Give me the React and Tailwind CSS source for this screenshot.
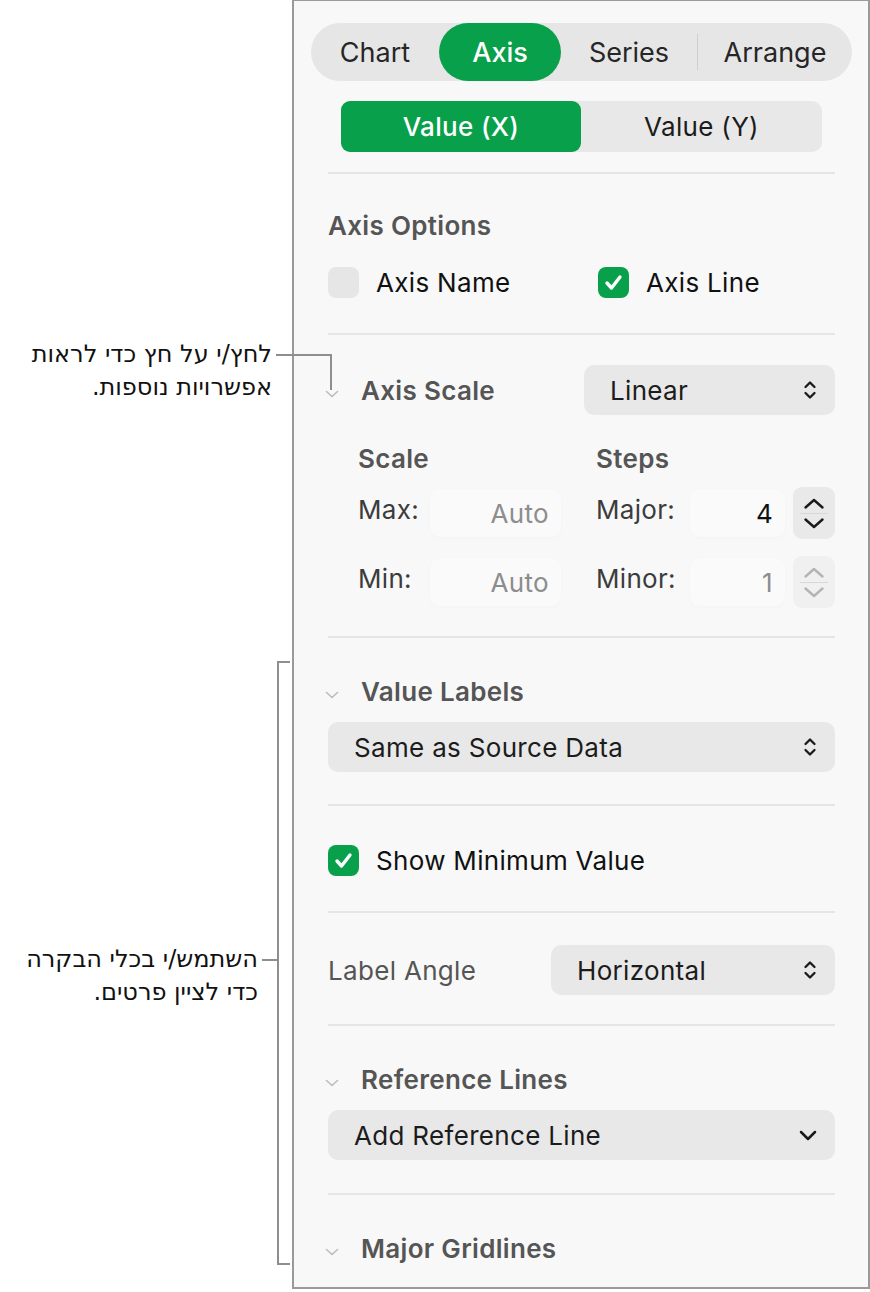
import React from 'react';

// inspector panel: Axis tab of the chart format sidebar, with two Hebrew callouts

const UpDown = ({ color = '#1a1a1a' }) => (
    <svg width="14" height="22" viewBox="0 0 14 22" fill="none" stroke={color} strokeWidth="2.3" strokeLinecap="round" strokeLinejoin="round">
        <path d="M2.5 8 L7 3.5 L11.5 8" />
        <path d="M2.5 14 L7 18.5 L11.5 14" />
    </svg>
);

const ChevronDown = () => (
    <svg width="18" height="11" viewBox="0 0 18 11" fill="none" stroke="#1a1a1a" strokeWidth="2.5" strokeLinecap="round" strokeLinejoin="round">
        <path d="M2 2 L9 9 L16 2" />
    </svg>
);

const Disclosure = () => (
    <svg width="14" height="8" viewBox="0 0 14 8" fill="none" stroke="#bcbcbc" strokeWidth="1.6" strokeLinecap="round" strokeLinejoin="round">
        <path d="M1.5 1.5 L7 6.5 L12.5 1.5" />
    </svg>
);

const Divider = ({ className = '' }) => <div className={`h-[2px] bg-[#e5e5e5] ${className}`} />;

const Check = ({ on }) =>
    on ? (
        <div className="flex h-[31px] w-[31px] shrink-0 items-center justify-center rounded-[8px] bg-[#08a04b]">
            <svg width="21" height="19" viewBox="0 0 21 19" fill="none" stroke="white" strokeWidth="3.4" strokeLinecap="round" strokeLinejoin="round">
                <path d="M4 10 L8.5 15 L17 4" />
            </svg>
        </div>
    ) : (
        <div className="h-[31px] w-[31px] shrink-0 rounded-[8px] bg-[#e6e6e6]" />
    );

const Heading = ({ children, className = '' }) => (
    <div className={`flex h-[30px] items-center ${className}`}>
        <div className="-ml-[3px] mt-[8px] w-[36px] shrink-0">
            <Disclosure />
        </div>
        <span className="text-[26px] font-semibold text-[#555]">{children}</span>
    </div>
);

const Select = ({ label, className = '', chevron = false }) => (
    <div className={`flex h-[50px] items-center justify-between rounded-[10px] bg-[#e8e8e8] pl-[26px] pr-[18px] ${className}`}>
        <span className="text-[26px] text-[#1c1c1c]">{label}</span>
        {chevron ? <ChevronDown /> : <UpDown />}
    </div>
);

const Field = ({ width, value, muted }) => (
    <div
        className={`flex h-[48px] items-center justify-end rounded-[10px] bg-[#fafafa] pr-[12px] shadow-[0_1px_5px_rgba(0,0,0,0.025)] ${muted ? 'text-[#8d8d8d]' : 'text-[#111]'}`}
        style={{ width }}
    >
        {value}
    </div>
);

const Stepper = ({ disabled }) => {
    const c = disabled ? '#b4b4b4' : '#1a1a1a';
    return (
        <div className={`ml-[8px] flex h-[52px] w-[42px] flex-col items-center justify-center rounded-[9px] ${disabled ? 'bg-[#f0f0f0]' : 'bg-[#e9e9e9]'}`}>
            <svg width="24" height="13" viewBox="0 0 24 13" fill="none" stroke={c} strokeWidth="2.4" strokeLinecap="round" strokeLinejoin="round">
                <path d="M3.5 10.5 L12 3 L20.5 10.5" />
            </svg>
            <div className="my-[3px] h-px w-[28px] bg-[#d8d8d8]" />
            <svg width="24" height="13" viewBox="0 0 24 13" fill="none" stroke={c} strokeWidth="2.4" strokeLinecap="round" strokeLinejoin="round">
                <path d="M3.5 2.5 L12 10 L20.5 2.5" />
            </svg>
        </div>
    );
};

const Callout = ({ lines, className }) => (
    <div
        dir="rtl"
        className={`absolute whitespace-nowrap text-right text-[24px] leading-[33px] text-[#111] ${className}`}
        style={{ fontFamily: '"DejaVu Sans", "Liberation Sans", sans-serif' }}
    >
        {lines.map((l) => (
            <div key={l}>{l}</div>
        ))}
    </div>
);

export default function App() {
    return (
        <div className="relative flex h-[1292px] w-[870px] bg-white" style={{ fontFamily: 'Inter, "Liberation Sans", sans-serif' }}>
            <div className="relative w-[292px] shrink-0">
                <Callout lines={['לחץ/י על חץ כדי לראות', 'אפשרויות נוספות.']} className="right-[20px] top-[338px]" />
                <Callout lines={['השתמש/י בכלי הבקרה', 'כדי לציין פרטים.']} className="right-[34px] top-[943px]" />
            </div>

            <div className="h-[1289px] w-[578px] shrink-0 overflow-hidden border-x-2 border-t border-b-2 border-[#9a9a9a] bg-[#f8f8f8] pl-[34px] pr-[33px] tracking-[0.02em]">
                {/* tabs */}
                <div className="-mx-[17px] mt-[22px] flex h-[58px] items-center rounded-full bg-[#e6e6e6] text-[27px] tracking-normal text-[#262626]">
                    <div className="flex w-[128px] justify-center pt-[3px]">Chart</div>
                    <div className="flex h-full w-[122px] items-center justify-center rounded-full bg-[#08a04b] pt-[3px] font-medium text-white">Axis</div>
                    <div className="flex w-[136px] justify-center pt-[3px]">Series</div>
                    <div className="h-[36px] w-px bg-[#cfcfcf]" />
                    <div className="flex flex-1 justify-center pt-[3px]">Arrange</div>
                </div>

                <div className="mx-[13px] mt-[20px] flex h-[51px] rounded-[10px] bg-[#e8e8e8] text-[26px]">
                    <div className="flex w-[240px] items-center justify-center rounded-[9px] bg-[#08a04b] font-medium text-white">Value (X)</div>
                    <div className="flex flex-1 items-center justify-center text-[#1c1c1c]">Value (Y)</div>
                </div>

                <Divider className="mt-[20px]" />

                {/* axis options */}
                <div className="mt-[36px] flex h-[30px] items-center text-[26px] font-semibold text-[#555]">Axis Options</div>
                <div className="mt-[27px] flex h-[30px] items-center text-[26px] text-[#111]">
                    <div className="flex w-[270px] items-center gap-[17px]">
                        <Check />
                        <span>Axis Name</span>
                    </div>
                    <div className="flex items-center gap-[17px]">
                        <Check on />
                        <span>Axis Line</span>
                    </div>
                </div>

                <Divider className="mt-[36px]" />

                {/* axis scale */}
                <div className="mt-[30px] flex items-center justify-between">
                    <Heading>Axis Scale</Heading>
                    <Select label="Linear" className="w-[251px]" />
                </div>

                <div className="mt-[28px] grid grid-cols-[238px_1fr] pl-[30px] text-[26px]">
                    <div className="flex h-[30px] items-center font-semibold text-[#555]">Scale</div>
                    <div className="flex h-[30px] items-center font-semibold text-[#555]">Steps</div>
                </div>
                <div className="mt-[13px] grid grid-cols-[238px_1fr] pl-[30px] text-[26px]">
                    <div className="flex h-[54px] items-center">
                        <span className="mb-[8px] w-[72px] text-[#3c3c3c]">Max:</span>
                        <Field width={131} value="Auto" muted />
                    </div>
                    <div className="flex h-[54px] items-center">
                        <span className="mb-[8px] w-[94px] text-[#3c3c3c]">Major:</span>
                        <Field width={95} value="4" />
                        <Stepper />
                    </div>
                </div>
                <div className="mt-[15px] grid grid-cols-[238px_1fr] pl-[30px] text-[26px]">
                    <div className="flex h-[54px] items-center">
                        <span className="mb-[8px] w-[72px] text-[#3c3c3c]">Min:</span>
                        <Field width={131} value="Auto" muted />
                    </div>
                    <div className="flex h-[54px] items-center">
                        <span className="mb-[8px] w-[94px] text-[#3c3c3c]">Minor:</span>
                        <Field width={95} value="1" muted />
                        <Stepper disabled />
                    </div>
                </div>

                <Divider className="mt-[27px]" />

                {/* value labels */}
                <Heading className="mt-[38px]">Value Labels</Heading>
                <Select label="Same as Source Data" className="mt-[16px]" />

                <Divider className="mt-[32px]" />

                <div className="mt-[39px] flex h-[30px] items-center gap-[17px] text-[26px] text-[#111]">
                    <Check on />
                    <span>Show Minimum Value</span>
                </div>

                <Divider className="mt-[36px]" />

                <div className="mt-[32px] flex items-center justify-between">
                    <span className="text-[26px] text-[#555]">Label Angle</span>
                    <Select label="Horizontal" className="w-[284px]" />
                </div>

                <Divider className="mt-[29px]" />

                {/* reference lines */}
                <Heading className="mt-[38px]">Reference Lines</Heading>
                <Select label="Add Reference Line" chevron className="mt-[16px]" />

                <Divider className="mt-[33px]" />

                <Heading className="mt-[38px]">Major Gridlines</Heading>
            </div>

            {/* callout leaders */}
            <div className="absolute left-[276px] top-[354px] h-[2px] w-[56px] bg-[#8e8e8e]" />
            <div className="absolute left-[330px] top-[354px] h-[36px] w-[2px] bg-[#8e8e8e]" />

            <div className="absolute left-[262px] top-[959px] h-[2px] w-[16px] bg-[#8e8e8e]" />
            <div className="absolute left-[277px] top-[661px] h-[604px] w-[2px] bg-[#8e8e8e]" />
            <div className="absolute left-[277px] top-[661px] h-[2px] w-[13px] bg-[#8e8e8e]" />
            <div className="absolute left-[277px] top-[1263px] h-[2px] w-[13px] bg-[#8e8e8e]" />
        </div>
    );
}
